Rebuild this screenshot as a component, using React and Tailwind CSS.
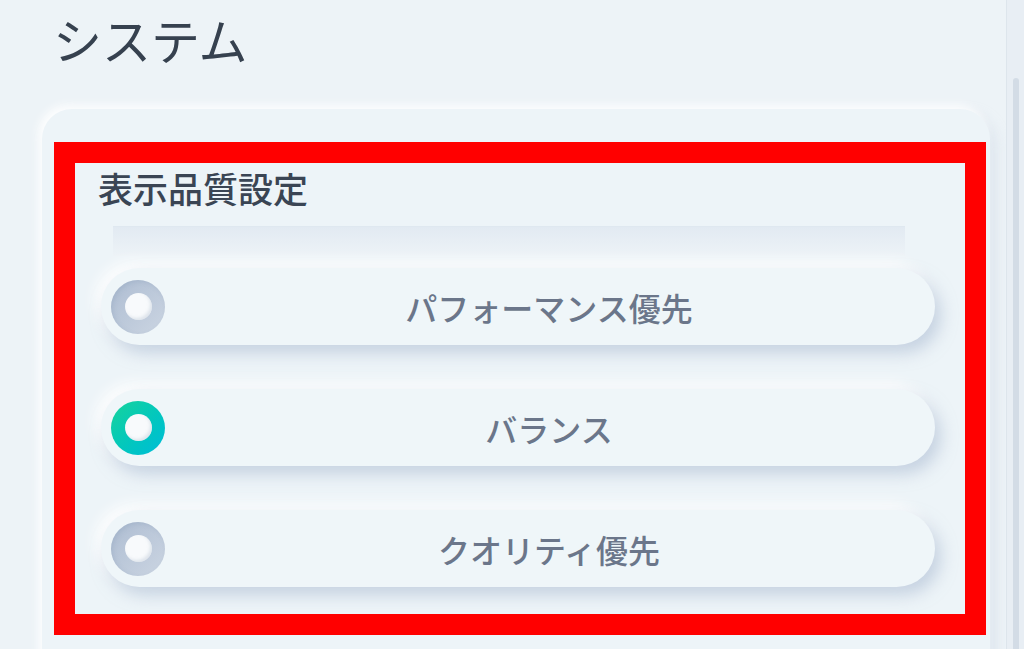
import React from 'react';

const options = [
  { label: 'パフォーマンス優先', selected: false },
  { label: 'バランス', selected: true },
  { label: 'クオリティ優先', selected: false },
];

function Radio({ selected }) {
  return (
    <div
      className={
        selected
          ? 'w-[54px] h-[54px] shrink-0 rounded-full flex items-center justify-center bg-gradient-to-br from-[#17d39a] to-[#00bcd8]'
          : 'w-[54px] h-[54px] shrink-0 rounded-full flex items-center justify-center bg-gradient-to-br from-[#aebdd2] to-[#cbd5e2] shadow-[inset_2px_2px_4px_rgba(140,158,184,0.3)]'
      }
    >
      <div className="w-[27px] h-[27px] rounded-full bg-[#f8fafc] shadow-[inset_-2px_-2px_3px_rgba(200,210,222,0.5)]" />
    </div>
  );
}

function Option({ label, selected }) {
  return (
    <div className="h-[77px] rounded-full bg-[#eff6f9] flex items-center pl-[10px] pr-[2px] shadow-[6px_8px_16px_rgba(160,178,204,0.5),-6px_-6px_14px_rgba(255,255,255,0.95)]">
      <Radio selected={selected} />
      <div className="flex-1 text-center text-[32px] leading-none font-medium text-[#6b768a]">
        {label}
      </div>
    </div>
  );
}

export default function App() {
  return (
    <div
      className="relative w-[1024px] h-[649px] overflow-hidden bg-[#edf3f7] flex"
      style={{ fontFamily: '"Noto Sans CJK JP", "Noto Sans", sans-serif' }}
    >
      <div className="flex-1 pl-[42px] pr-[16px]">
        <h1 className="pl-[11px] pt-[13px] text-[49px] leading-[52px] font-normal text-[#36414f]">
          システム
        </h1>

        <div className="mt-[44px] h-[600px] rounded-[30px] bg-[#edf4f8] shadow-[-4px_-4px_10px_rgba(255,255,255,0.9),6px_6px_14px_rgba(190,204,220,0.35)] pt-[60px] pl-[59px] pr-[55px]">
          <h2 className="-ml-[3px] text-[35px] leading-[38px] font-medium text-[#3a4554]">表示品質設定</h2>

          <div className="mt-[19px] ml-[12px] mr-[30px] h-[30px] border-t border-[#dfe8f0] bg-gradient-to-b from-[#e2eaf2] to-[#edf3f7]" />

          <div className="mt-[12px] flex flex-col gap-[44px]">
            {options.map((o) => (
              <Option key={o.label} label={o.label} selected={o.selected} />
            ))}
          </div>
        </div>
      </div>

      <div className="w-[18px] bg-[#e8eef4] border-l border-[#dde5ec] pt-[78px] flex justify-center">
        <div className="w-[6px] h-[600px] rounded-full bg-[#d3dce6]" />
      </div>

      <div className="absolute left-[54px] top-[142px] w-[932px] h-[493px] border-[21px] border-[#ff0000] pointer-events-none" />
    </div>
  );
}
